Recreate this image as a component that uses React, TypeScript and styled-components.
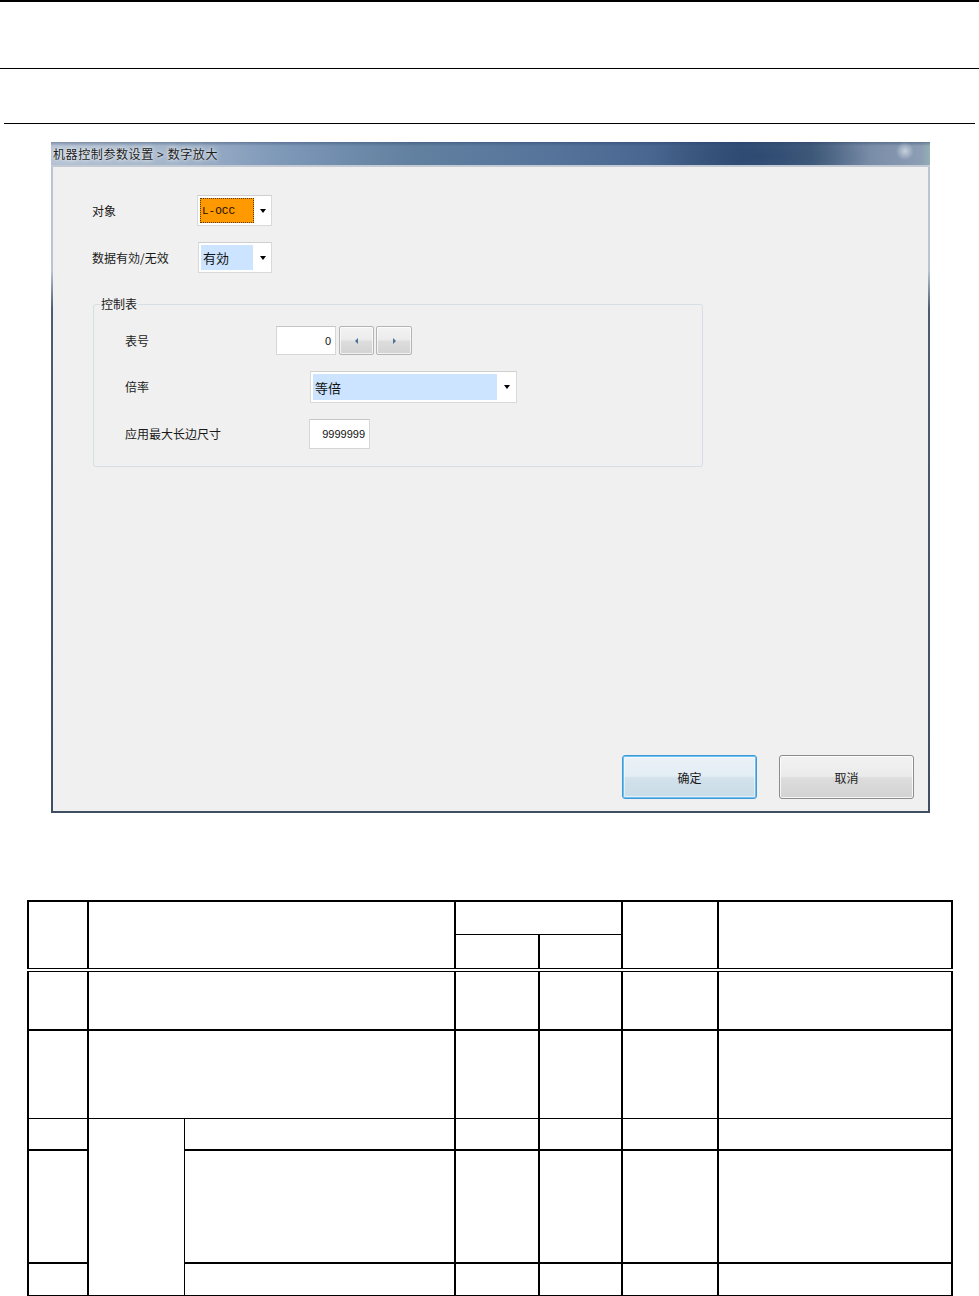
import React from "react";
import styled, { createGlobalStyle } from "styled-components";

const GlobalStyle = createGlobalStyle`
  body {
    margin: 0;
    background: #fff;
    font-family: "Noto Sans CJK SC", "Liberation Sans", sans-serif;
  }
`;

const Page = styled.div`
  width: 979px;
  height: 1296px;
  overflow: hidden;
  display: flex;
  flex-direction: column;
`;

const Rule = styled.hr<{ $top: number; $inset?: number; $weight?: number }>`
  margin: ${({ $top }) => $top}px ${({ $inset }) => $inset ?? 0}px 0;
  border: none;
  height: ${({ $weight }) => $weight ?? 1}px;
  background: #000;
  flex-shrink: 0;
`;

/* ---- dialog window ---- */

const Dialog = styled.section`
  margin: 18px 0 0 51px;
  width: 879px;
  display: flex;
  flex-direction: column;
  flex-shrink: 0;
`;

const TitleBar = styled.div`
  height: 23px;
  display: flex;
  align-items: center;
  padding-left: 2px;
  font-size: 12px;
  letter-spacing: 0.6px;
  color: #1c1c1c;
  border-bottom: 2px solid #c3cad4;
  background:
    radial-gradient(circle at 854px 9px, rgba(225, 232, 240, 0.7) 0, rgba(225, 232, 240, 0) 9px),
    radial-gradient(ellipse 110px 24px at 710px 14px, rgba(35, 60, 100, 0.45), rgba(35, 60, 100, 0)),
    linear-gradient(to bottom, rgba(30, 50, 90, 0.35) 0, rgba(30, 50, 90, 0) 4px),
    linear-gradient(
      to right,
      #b4c2d3 0,
      #a3b5ca 120px,
      #7e98b8 230px,
      #62809f 360px,
      #56749b 500px,
      #48668f 600px,
      #35527b 690px,
      #45607f 760px,
      #7a8da8 820px,
      #8c9db4 870px,
      #93b0b3 879px
    );
`;

const TitleText = styled.span`
  text-shadow: 0 0 6px rgba(255, 255, 255, 0.9), 0 0 3px rgba(255, 255, 255, 0.8);
`;

const Frame = styled.div`
  padding: 0 2px 2px;
  background: linear-gradient(to bottom, #b9c5d3 0, #b9c5d3 16%, #4d5c71 22%, #3f4e63 100%);
`;

const Body = styled.div`
  height: 644px;
  box-sizing: border-box;
  background: #f0f0f0;
  display: flex;
  flex-direction: column;
  padding: 28px 14px 12px 39px;
  font-size: 12px;
  color: #1a1a1a;
`;

const Field = styled.div<{ $top?: number }>`
  display: flex;
  align-items: center;
  margin-top: ${({ $top }) => $top ?? 0}px;
`;

const Label = styled.span<{ $width: number }>`
  width: ${({ $width }) => $width}px;
  flex-shrink: 0;
  line-height: 16px;
`;

const Combo = styled.div<{ $width: number; $height: number }>`
  width: ${({ $width }) => $width}px;
  height: ${({ $height }) => $height}px;
  box-sizing: border-box;
  background: #fff;
  border: 1px solid #d9d9d9;
  border-top-color: #cfcfcf;
  padding: 2px;
  display: flex;
  align-items: stretch;
`;

const ComboValue = styled.div<{ $width: number; $focus?: boolean }>`
  width: ${({ $width }) => $width}px;
  box-sizing: border-box;
  display: flex;
  align-items: center;
  padding-left: 1px;
  background: ${({ $focus }) => ($focus ? "#ff9900" : "#cce4ff")};
  border: 1px ${({ $focus }) => ($focus ? "dotted #5a3a00" : "solid #cce4ff")};
  font-size: 13px;
  color: #111;
`;

const MonoText = styled.span`
  font-family: "Liberation Mono", monospace;
  font-size: 11px;
  color: #1a1000;
`;

const DropArrow = styled.span<{ $right: number }>`
  margin: auto ${({ $right }) => $right}px auto auto;
  width: 0;
  height: 0;
  border-left: 3.5px solid transparent;
  border-right: 3.5px solid transparent;
  border-top: 4px solid #000;
`;

const TextBox = styled.div<{ $width: number; $height: number }>`
  width: ${({ $width }) => $width}px;
  height: ${({ $height }) => $height}px;
  box-sizing: border-box;
  background: #fff;
  border: 1px solid #d6d6d6;
  border-top-color: #c6c6c6;
  display: flex;
  align-items: center;
  justify-content: flex-end;
  padding-right: 4px;
  font-family: "Liberation Sans", sans-serif;
  font-size: 11px;
  color: #111;
`;

const SpinButton = styled.button<{ $width: number; $gap: number }>`
  width: ${({ $width }) => $width}px;
  height: 29px;
  margin-left: ${({ $gap }) => $gap}px;
  padding: 0;
  border: 1px solid #b4b4b4;
  border-radius: 2px;
  background: linear-gradient(to bottom, #f3f3f3 0, #ebebeb 48%, #dddddd 52%, #d3d3d3 100%);
  box-shadow: inset 0 0 0 1px rgba(255, 255, 255, 0.7);
  display: flex;
  align-items: center;
  justify-content: center;
`;

const SpinArrow = styled.span<{ $dir: "left" | "right" }>`
  width: 0;
  height: 0;
  border-top: 3px solid transparent;
  border-bottom: 3px solid transparent;
  ${({ $dir }) =>
    $dir === "left" ? "border-right: 3px solid #4b6f9e;" : "border-left: 3px solid #4b6f9e;"}
`;

const Group = styled.fieldset`
  margin: 23px 0 0 1px;
  width: 610px;
  box-sizing: border-box;
  border: 1px solid #d5dfe5;
  border-radius: 3px;
  padding: 14px 0 17px 0;
  min-width: 0;
`;

const Legend = styled.legend`
  margin-left: 6px;
  padding: 0 1px;
  line-height: 16px;
  font-size: 12px;
`;

const GroupContent = styled.div`
  padding-left: 31px;
`;

const ButtonRow = styled.div`
  margin-top: auto;
  display: flex;
  justify-content: flex-end;
  gap: 22px;
`;

const DialogButton = styled.button<{ $primary?: boolean }>`
  width: 135px;
  height: 44px;
  box-sizing: border-box;
  border-radius: 3px;
  font-family: "Noto Sans CJK SC", sans-serif;
  font-size: 12px;
  color: #1a1a1a;
  border: 1px solid ${({ $primary }) => ($primary ? "#3d9ad6" : "#8c8c8c")};
  box-shadow: ${({ $primary }) =>
    $primary
      ? "inset 0 0 0 1px #6fc0ee, inset 0 0 0 2px rgba(255,255,255,0.5)"
      : "inset 0 0 0 1px rgba(255,255,255,0.8)"};
  background: ${({ $primary }) =>
    $primary
      ? "linear-gradient(to bottom, #ebf2f7 0, #e3edf4 48%, #d3e2ec 52%, #c9dbe7 100%)"
      : "linear-gradient(to bottom, #f2f2f2 0, #ebebeb 48%, #dddddd 52%, #d2d2d2 100%)"};
`;

/* ---- document table ---- */

const Grid = styled.table`
  margin: 87px 0 0 27px;
  width: 924px;
  border-collapse: collapse;
  table-layout: fixed;
  flex-shrink: 0;
`;

const Col = styled.col<{ $w: number }>`
  width: ${({ $w }) => $w}px;
`;

const Row = styled.tr<{ $h: number }>`
  height: ${({ $h }) => $h}px;
`;

const Cell = styled.td<{ $thin?: string; $double?: boolean }>`
  border: 2px solid #000;
  padding: 0;
  ${({ $thin }) =>
    ($thin ?? "")
      .split(" ")
      .filter(Boolean)
      .map((s) => `border-${s}-width: 1px;`)
      .join("")}
  ${({ $double }) => ($double ? "border-bottom: 4px double #000;" : "")}
`;

const BodyRow = ({ h, thin, split }: { h: number; thin?: string; split?: "start" | "rest" }) => (
  <Row $h={h}>
    <Cell $thin={thin} />
    {split === "start" && <Cell rowSpan={3} $thin={`${thin ?? ""} right`} />}
    {split ? <Cell $thin={`${thin ?? ""} left`} /> : <Cell colSpan={2} $thin={thin} />}
    <Cell $thin={thin} />
    <Cell $thin={thin} />
    <Cell $thin={thin} />
    <Cell $thin={thin} />
  </Row>
);

export default function App() {
  return (
    <>
      <GlobalStyle />
      <Page>
        <Rule $top={0} $weight={2} />
        <Rule $top={66} />
        <Rule $top={54} $inset={4} />

        <Dialog>
          <TitleBar>
            <TitleText>机器控制参数设置 &gt; 数字放大</TitleText>
          </TitleBar>
          <Frame>
            <Body>
              <Field>
                <Label $width={105}>对象</Label>
                <Combo $width={75} $height={31}>
                  <ComboValue $width={54} $focus>
                    <MonoText>L-OCC</MonoText>
                  </ComboValue>
                  <DropArrow $right={3} />
                </Combo>
              </Field>
              <Field $top={16}>
                <Label $width={106}>数据有効/无效</Label>
                <Combo $width={74} $height={31}>
                  <ComboValue $width={52}>有効</ComboValue>
                  <DropArrow $right={3} />
                </Combo>
              </Field>

              <Group>
                <Legend>控制表</Legend>
                <GroupContent>
                  <Field>
                    <Label $width={151}>表号</Label>
                    <TextBox $width={60} $height={29}>0</TextBox>
                    <SpinButton $width={35} $gap={3}>
                      <SpinArrow $dir="left" />
                    </SpinButton>
                    <SpinButton $width={36} $gap={2}>
                      <SpinArrow $dir="right" />
                    </SpinButton>
                  </Field>
                  <Field $top={16}>
                    <Label $width={185}>倍率</Label>
                    <Combo $width={207} $height={32}>
                      <ComboValue $width={184}>等倍</ComboValue>
                      <DropArrow $right={4} />
                    </Combo>
                  </Field>
                  <Field $top={16}>
                    <Label $width={184}>应用最大长边尺寸</Label>
                    <TextBox $width={61} $height={30}>9999999</TextBox>
                  </Field>
                </GroupContent>
              </Group>

              <ButtonRow>
                <DialogButton $primary>确定</DialogButton>
                <DialogButton>取消</DialogButton>
              </ButtonRow>
            </Body>
          </Frame>
        </Dialog>

        <Grid>
          <colgroup>
            <Col $w={60} />
            <Col $w={96} />
            <Col $w={271} />
            <Col $w={84} />
            <Col $w={83} />
            <Col $w={96} />
            <Col $w={234} />
          </colgroup>
          <thead>
            <Row $h={33}>
              <Cell rowSpan={2} $double />
              <Cell rowSpan={2} colSpan={2} $double />
              <Cell colSpan={2} $thin="bottom" />
              <Cell rowSpan={2} $double />
              <Cell rowSpan={2} $double />
            </Row>
            <Row $h={36}>
              <Cell $thin="top" $double />
              <Cell $thin="top" $double />
            </Row>
          </thead>
          <tbody>
            <BodyRow h={60} />
            <BodyRow h={88} thin="bottom" />
            <BodyRow h={32} thin="top" split="start" />
            <BodyRow h={113} split="rest" />
            <BodyRow h={33} split="rest" />
          </tbody>
        </Grid>
      </Page>
    </>
  );
}
